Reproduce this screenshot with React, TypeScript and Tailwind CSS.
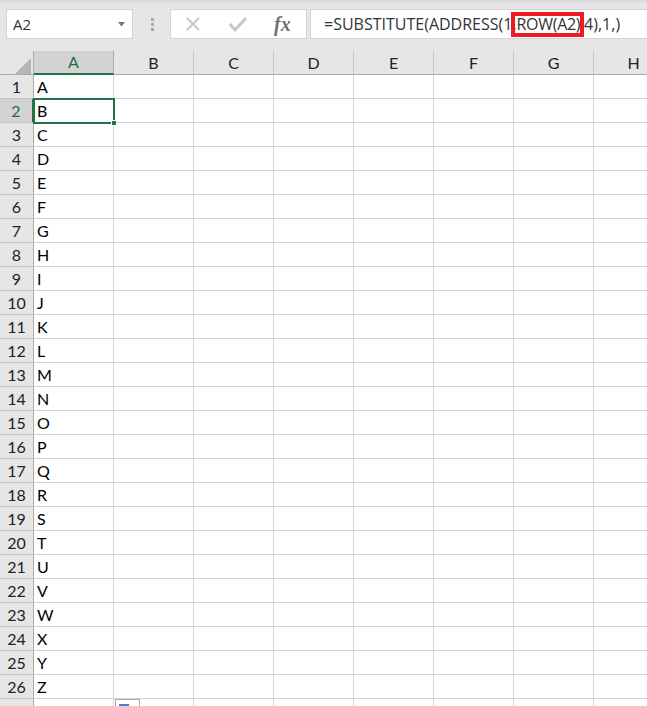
import React from "react";

const columns = ["A", "B", "C", "D", "E", "F", "G", "H"];
const letters = "ABCDEFGHIJKLMNOPQRSTUVWXYZ".split("");

const FormulaBar = () => {
  return (
    <div className="flex h-[51px] bg-[#e6e6e6] border-t-[3px] border-[#dcdcdc] pt-[6px] items-start">
      <div className="ml-[6px] w-[127px] h-[30px] bg-white border border-[#d4d4d4] flex items-center justify-between pl-[6px] pr-[6px] text-[#333] text-[15px] font-['Open_Sans',sans-serif]">
        <span>A2</span>
        <svg width="8" height="5" viewBox="0 0 8 5" className="mt-[1px]">
          <path d="M0 0h7L3.5 4.5z" fill="#777" />
        </svg>
      </div>
      <div className="w-[37px] h-[30px] flex flex-col items-center justify-center gap-[2px] pl-[1px]">
        <span className="w-[3px] h-[3px] bg-[#a8a8a8]" />
        <span className="w-[3px] h-[3px] bg-[#a8a8a8]" />
        <span className="w-[3px] h-[3px] bg-[#a8a8a8]" />
      </div>
      <div className="w-[137px] h-[30px] bg-white border border-[#d4d4d4] flex items-center pl-[14px]">
        <svg width="16" height="16" viewBox="0 0 16 16" fill="none">
          <path d="M2 2l12 12M14 2L2 14" stroke="#c8c8c8" strokeWidth="2" />
        </svg>
        <svg width="18" height="16" viewBox="0 0 18 16" fill="none" className="ml-[28px]">
          <path d="M1 8l5 6L17 2" stroke="#c8c8c8" strokeWidth="3" />
        </svg>
        <span className="ml-[27px] text-[#707070] text-[20px] italic font-bold font-['Liberation_Serif',serif] leading-none">
          fx
        </span>
      </div>
      <div className="relative ml-[3px] flex-1 h-[30px] bg-white border border-[#d4d4d4] border-r-0 flex items-center pl-[13px] text-[#333] text-[16px] whitespace-pre overflow-hidden font-['Open_Sans',sans-serif]">
        <span>=SUBSTITUTE(ADDRESS(1,</span>
        <span className="tracking-[-0.3px]">ROW(A2),</span>
        <span>4),1,)</span>
        <div className="absolute left-[200px] top-[2px] w-[73px] h-[25px] border-4 border-[#ed1c24]" />
      </div>
    </div>
  );
};

const HeaderRow = () => {
  return (
    <div className="flex h-[24px] bg-[#e6e6e6] border-b border-[#ababab]">
      <div className="w-[34px] shrink-0 h-full border-r border-[#ababab] relative">
        <svg width="16" height="16" viewBox="0 0 16 16" className="absolute left-[15px] top-[7px]">
          <path d="M16 0v16H0z" fill="#b4b4b4" />
        </svg>
      </div>
      {columns.map((c) => (
        <div
          key={c}
          className={
            c === "A"
              ? "w-[80px] shrink-0 h-[24px] flex items-center justify-center text-[16px] bg-[#d2d2d2] text-[#1f6f43] border-r border-[#ababab] border-b-2 border-b-[#217346]"
              : "w-[80px] shrink-0 h-[23px] flex items-center justify-center text-[16px] text-[#222] border-r border-[#c6c6c6]"
          }
        >
          {c}
        </div>
      ))}
    </div>
  );
};

const Row = ({ n, value }: { n: number; value?: string }) => {
  return (
    <div className="flex h-[24px]">
      <div
        className={
          n === 2
            ? "w-[34px] shrink-0 flex items-center justify-center text-[16px] text-[#1f6f43] bg-[#d2d2d2] border-r-2 border-r-[#217346] border-b border-[#c6c6c6]"
            : "w-[34px] shrink-0 flex items-center justify-center text-[16px] text-[#222] bg-[#e6e6e6] border-r border-[#ababab] border-b border-b-[#c6c6c6]"
        }
      >
        {n}
      </div>
      {columns.map((c) => (
        <div
          key={c}
          className="w-[80px] shrink-0 border-r border-b border-[#d4d4d4] pl-[3px] flex items-center text-[16px] text-black"
        >
          {c === "A" ? value : null}
        </div>
      ))}
    </div>
  );
};

export default function App() {
  return (
    <div className="relative w-[647px] h-[706px] overflow-hidden bg-white font-['Lato',sans-serif]">
      <FormulaBar />
      <HeaderRow />
      {letters.map((l, i) => (
        <Row key={l} n={i + 1} value={l} />
      ))}
      <Row n={27} />

      {/* selected cell */}
      <div className="absolute left-[33px] top-[98px] w-[82px] h-[26px] border-2 border-[#217346]">
        <div className="absolute right-[-4px] bottom-[-4px] w-[6px] h-[6px] bg-[#217346] border border-white" />
      </div>

      {/* paste options */}
      <div className="absolute left-[115px] top-[699px] w-[25px] h-[14px] bg-white border border-[#ababab] pl-[3px] pt-[4px]">
        <div className="w-[10px] h-[3px] bg-[#4a7fc8]" />
      </div>
    </div>
  );
}
